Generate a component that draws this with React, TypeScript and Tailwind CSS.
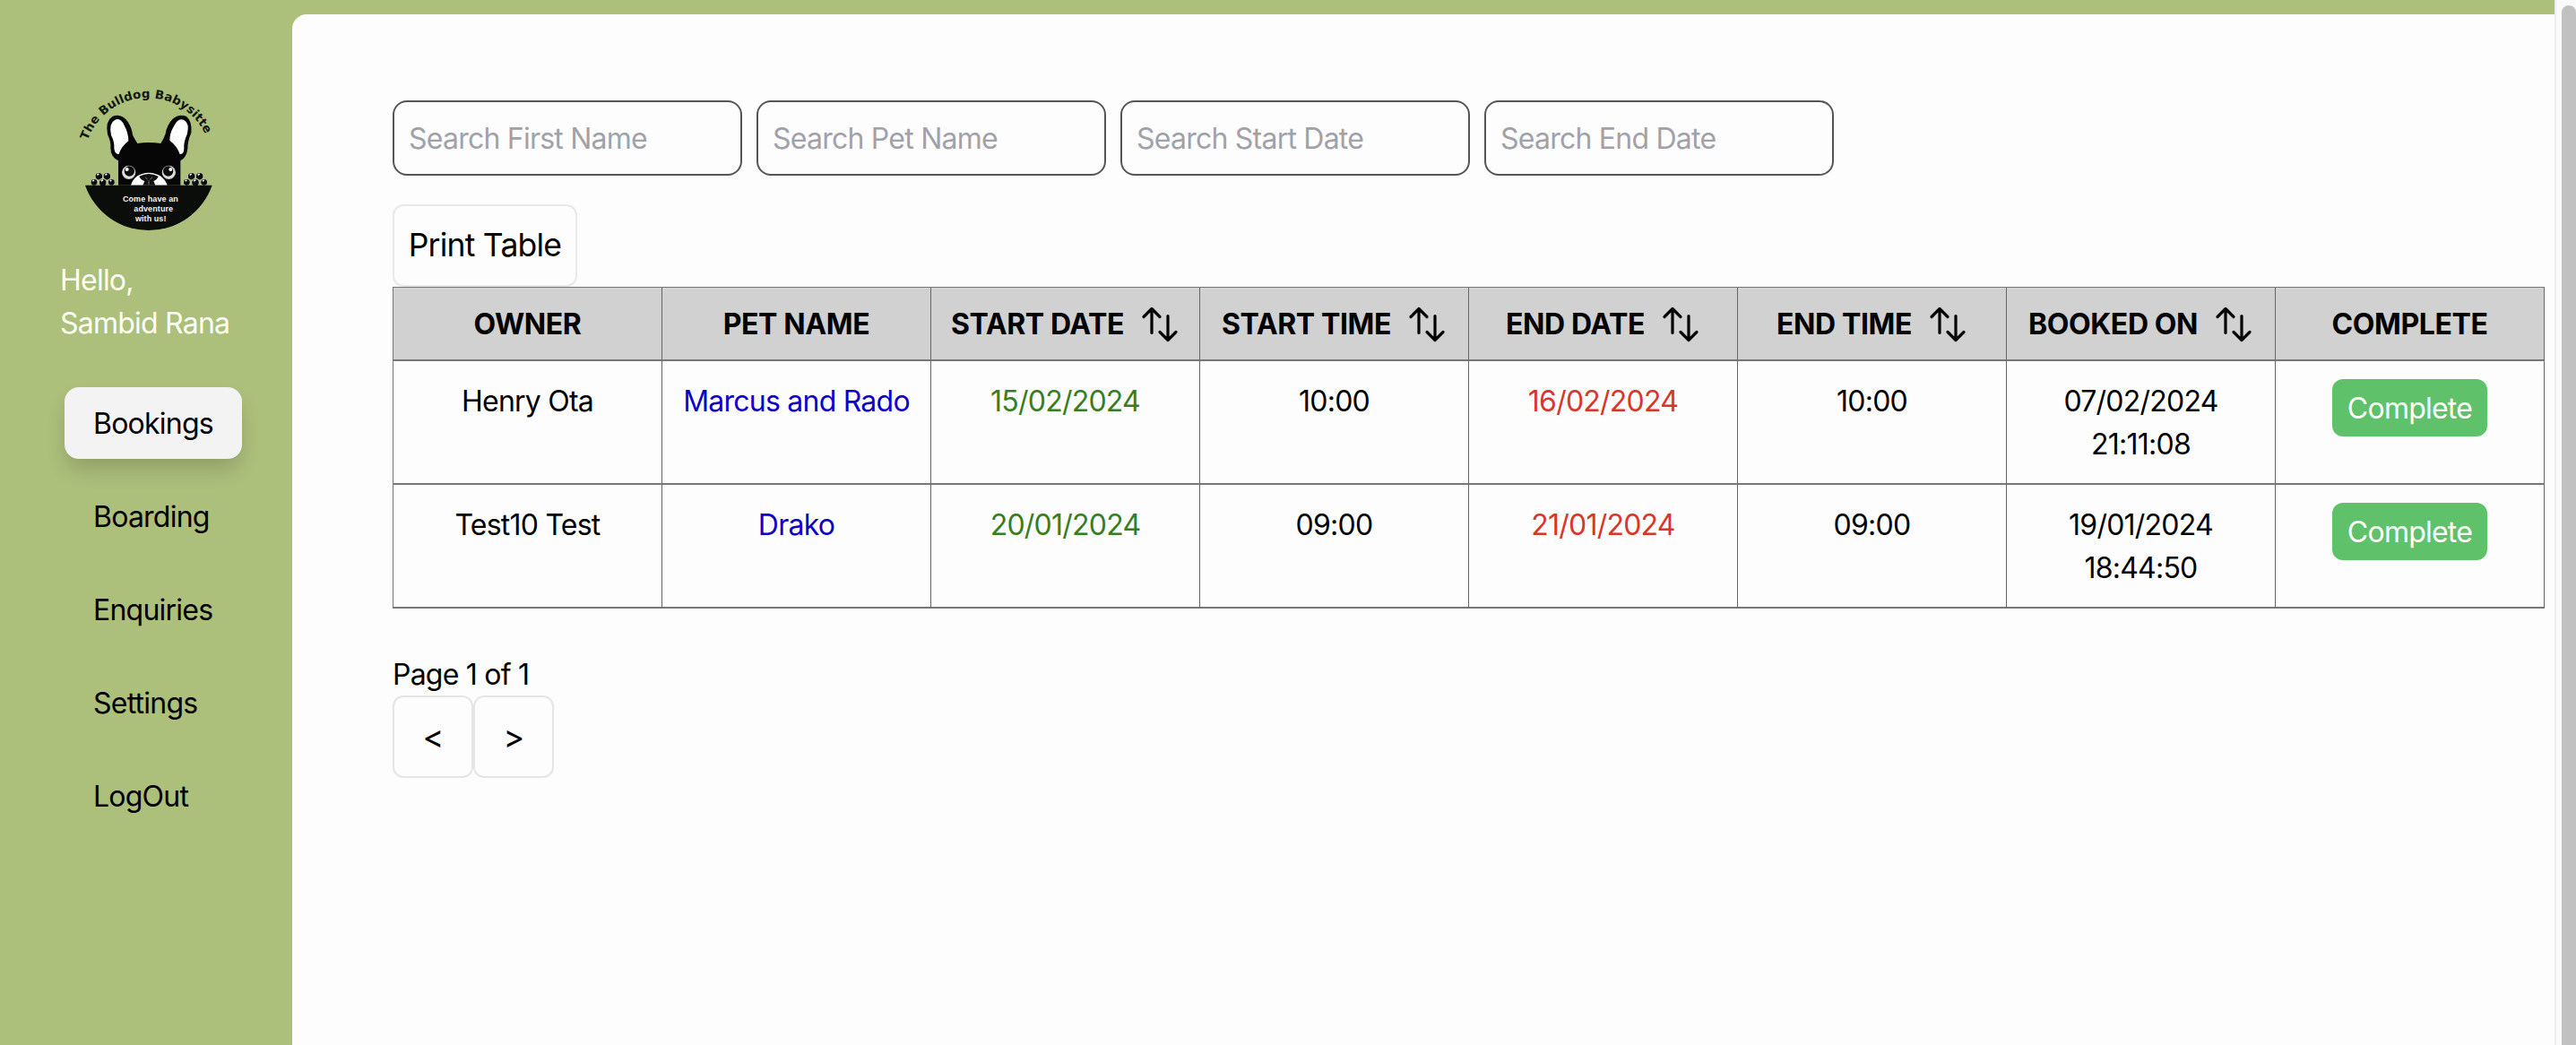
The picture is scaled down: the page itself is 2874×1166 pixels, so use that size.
import React from "react";

const navItems = ["Bookings", "Boarding", "Enquiries", "Settings", "LogOut"];

const filters = [
  "Search First Name",
  "Search Pet Name",
  "Search Start Date",
  "Search End Date",
];

const columns = [
  { label: "OWNER", sortable: false },
  { label: "PET NAME", sortable: false },
  { label: "START DATE", sortable: true },
  { label: "START TIME", sortable: true },
  { label: "END DATE", sortable: true },
  { label: "END TIME", sortable: true },
  { label: "BOOKED ON", sortable: true },
  { label: "COMPLETE", sortable: false },
];

const bookings = [
  {
    owner: "Henry Ota",
    pet: "Marcus and Rado",
    startDate: "15/02/2024",
    startTime: "10:00",
    endDate: "16/02/2024",
    endTime: "10:00",
    bookedDate: "07/02/2024",
    bookedTime: "21:11:08",
  },
  {
    owner: "Test10 Test",
    pet: "Drako",
    startDate: "20/01/2024",
    startTime: "09:00",
    endDate: "21/01/2024",
    endTime: "09:00",
    bookedDate: "19/01/2024",
    bookedTime: "18:44:50",
  },
];

function Paw({ x }: { x: number }) {
  return (
    <g transform={`translate(${x} 0)`} fill="#0b0d0b" stroke="#b9c39a" strokeWidth="3.5">
      <circle cx="30" cy="350" r="13" />
      <circle cx="57" cy="350" r="13" />
      <circle cx="14" cy="370" r="12" />
      <circle cx="43" cy="371" r="13" />
      <circle cx="72" cy="370" r="12" />
      <path d="M24 346 l6 -4 M51 346 l6 -4 M37 366 l7 -4 M9 366 l5 -3 M67 366 l5 -3" stroke="#f4f4f4" strokeWidth="5" />
    </g>
  );
}

function Logo() {
  return (
    <svg viewBox="0 0 660 600" className="h-[200px] w-[220px]" aria-label="The Bulldog Babysitter">
      <defs>
        <path id="logo-arc" d="M113 230 A213 213 0 0 1 527 302" />
      </defs>
      <text
        fontFamily="DejaVu Sans, sans-serif"
        fontWeight="700"
        fontSize="40"
        letterSpacing="0.3"
        fill="#10170c"
      >
        <textPath href="#logo-arc">The Bulldog Babysitte</textPath>
      </text>

      <path
        d="M216 380 L216 298 Q190 285 190 255 Q192 235 180 210 Q172 165 196 150 Q226 138 248 168 Q262 190 264 212 Q272 228 280 240 Q318 234 358 240 Q368 225 374 208 Q378 178 398 158 Q420 140 444 150 Q464 166 460 205 Q448 232 448 258 Q444 288 424 298 L424 380 Z"
        fill="#050605"
      />
      <path
        d="M204 162 Q224 152 236 180 Q250 205 250 232 Q226 250 218 276 Q204 278 202 256 Q204 236 192 212 Q184 172 204 162 Z"
        fill="#fdfdfd"
      />
      <path
        d="M436 162 Q416 152 402 182 Q388 205 388 230 Q412 248 422 276 Q436 278 436 256 Q434 236 446 210 Q456 172 436 162 Z"
        fill="#fdfdfd"
      />
      <path d="M258 380 Q270 340 318 338 Q366 340 380 380 Z" fill="#fdfdfd" />
      <path
        d="M286 350 Q318 334 350 350 Q346 362 334 366 L340 380 L298 380 L304 366 Q290 362 286 350 Z"
        fill="#111"
      />
      <path d="M306 354 l8 6 M330 354 l-8 6 M318 364 v14" stroke="#777" strokeWidth="3" />
      {[251, 385].map((cx) => (
        <g key={cx}>
          <circle cx={cx} cy="337" r="27" fill="#050605" />
          <circle cx={cx} cy="337" r="21" fill="#e4e4e4" stroke="#d0d0d0" strokeWidth="4" />
          <circle cx={cx + (cx < 300 ? 2 : -2)} cy="333" r="17" fill="#0c0c0c" />
          <circle cx={cx + (cx < 300 ? -6 : 6)} cy="327" r="6" fill="#fff" />
        </g>
      ))}
      <Paw x={121} />
      <Paw x={431} />
      <path d="M105 380 H530 A225 225 0 0 1 105 380 Z" fill="#0b0d0b" />
      <g fontFamily="Liberation Sans, sans-serif" fontWeight="700" fontSize="27" letterSpacing="-0.2" fill="#f2f2f2">
        <text x="231" y="434" textLength="185">Come have an</text>
        <text x="268" y="468" textLength="131">adventure</text>
        <text x="273" y="500" textLength="103">with us!</text>
      </g>
    </svg>
  );
}

function SortIcon() {
  return (
    <svg
      viewBox="0 0 44 44"
      className="h-11 w-11 shrink-0"
      fill="none"
      stroke="#000"
      strokeWidth="3.2"
      strokeLinecap="round"
      strokeLinejoin="round"
    >
      <path d="M13 31.500V4.500M4 13.500l9-9 9 9" />
      <path d="M31 12.500v27M22 30.500l9 9 9-9" />
    </svg>
  );
}

function Cell({ children, className = "" }: { children: React.ReactNode; className?: string }) {
  return (
    <div className={`h-[138px] border-r border-b-2 border-[#777] border-r-[#666] text-center ${className}`}>
      {children}
    </div>
  );
}

function Sidebar() {
  return (
    <aside className="flex w-[326px] shrink-0 flex-col">
      <div className="mt-20 ml-[60px]">
        <Logo />
      </div>
      <div className="mt-[9px] ml-[67px] text-[#fdfff5]">
        <p>Hello,</p>
        <p>Sambid Rana</p>
      </div>
      <nav className="mt-[47px] ml-[72px] flex flex-col items-start gap-6">
        {navItems.map((item, i) => (
          <a
            key={item}
            className={
              i === 0
                ? "flex h-20 w-[198px] items-center rounded-2xl bg-[#f3f3f3] pt-0.5 pl-8 shadow-[0_14px_24px_-4px_rgba(0,0,0,0.18)]"
                : "flex h-20 w-[198px] items-center pt-0.5 pl-8"
            }
          >
            {item}
          </a>
        ))}
      </nav>
    </aside>
  );
}

export default function App() {
  return (
    <div className="flex h-[1166px] w-full overflow-hidden bg-[#acbf7b] font-['Inter',sans-serif] text-[32px] leading-[48px] font-[430] tracking-[-0.024em] text-black">
      <Sidebar />
      <main className="mt-4 flex-1 rounded-tl-2xl bg-[#fdfdfd] pt-24 pl-28">
        <div className="flex gap-4">
          {filters.map((f) => (
            <input
              key={f}
              placeholder={f}
              className="h-[84px] w-[390px] rounded-2xl border-2 border-[#555] bg-transparent px-4 placeholder:text-[#a1a1aa]"
            />
          ))}
        </div>
        <button className="mt-8 block h-[92px] w-[206px] rounded-xl border-2 border-[#e8e8e8] text-center text-[35.5px] whitespace-nowrap">
          Print Table
        </button>

        <div className="grid w-[2401px] grid-cols-8 border-t border-l border-[#777]">
          {columns.map((c) => (
            <div
              key={c.label}
              className="flex h-[82px] items-center justify-center gap-[18px] border-r border-b-2 border-[#777] border-r-[#666] bg-[#d1d1d1] pt-0.5 font-bold tracking-[-0.012em] whitespace-nowrap"
            >
              <span>{c.label}</span>
              {c.sortable && <SortIcon />}
            </div>
          ))}
          {bookings.map((b) => (
            <React.Fragment key={b.owner}>
              <Cell className="pt-[21px]">{b.owner}</Cell>
              <Cell className="pt-[21px] text-[#0f00c8]">{b.pet}</Cell>
              <Cell className="pt-[21px] text-[#377d22]">{b.startDate}</Cell>
              <Cell className="pt-[21px]">{b.startTime}</Cell>
              <Cell className="pt-[21px] text-[#d9362b]">{b.endDate}</Cell>
              <Cell className="pt-[21px]">{b.endTime}</Cell>
              <Cell className="pt-[21px]">
                <p>{b.bookedDate}</p>
                <p>{b.bookedTime}</p>
              </Cell>
              <Cell className="pt-5">
                <button className="mx-auto block h-16 w-[173px] rounded-xl bg-[#5fc26a] pt-0.5 text-center text-white">
                  Complete
                </button>
              </Cell>
            </React.Fragment>
          ))}
        </div>

        <p className="mt-[50px]">Page 1 of 1</p>
        <div className="-mt-px flex">
          <button className="h-[92px] w-[90px] rounded-xl border-2 border-[#e5e5e5] text-[36px]">&lt;</button>
          <button className="h-[92px] w-[90px] rounded-xl border-2 border-[#e5e5e5] text-[36px]">&gt;</button>
        </div>
      </main>
      <div className="w-6 shrink-0 border-l-2 border-[#ececec] bg-[#fafafa] pt-1.5 pl-1.5">
        <div className="h-[1180px] w-4 rounded-t-full bg-[#c1c1c1]" />
      </div>
    </div>
  );
}
